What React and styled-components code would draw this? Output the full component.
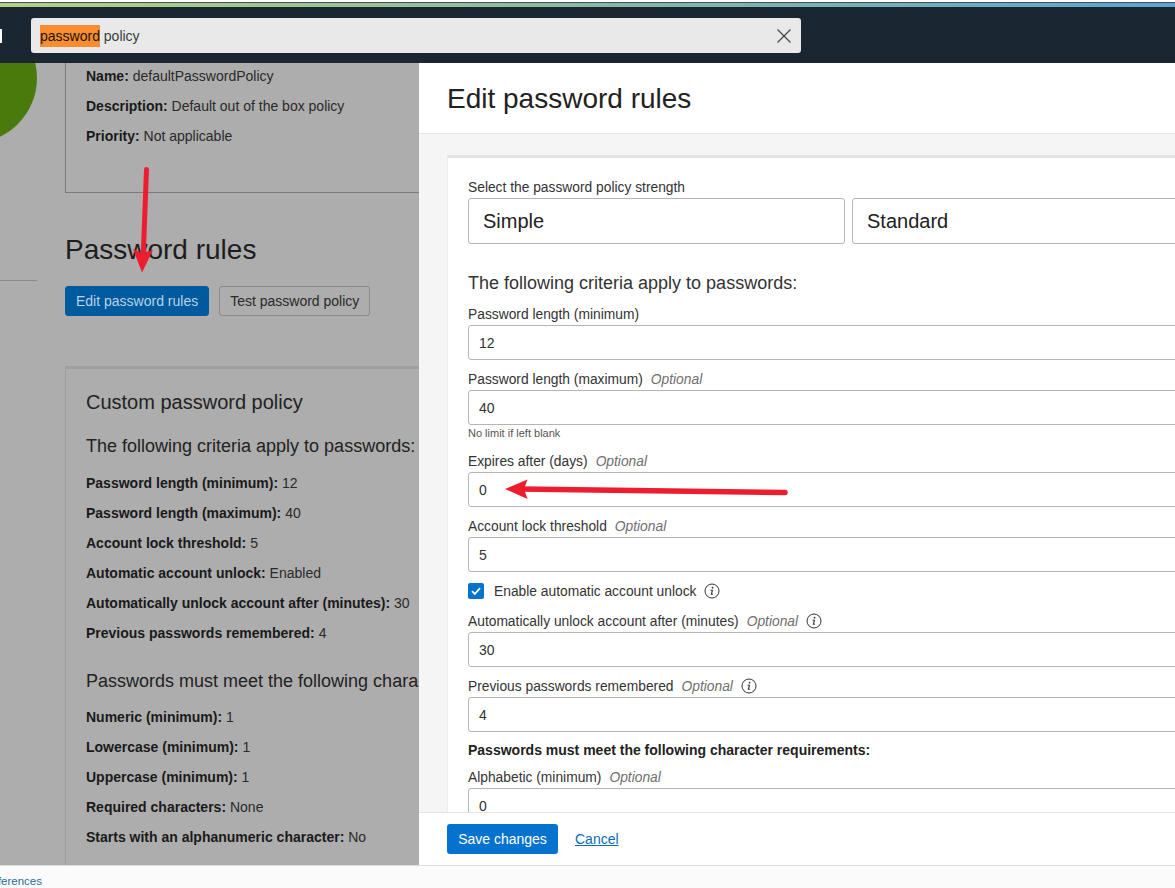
import React from 'react'
import styled, { createGlobalStyle } from 'styled-components'

const Global = createGlobalStyle`
  html, body {
    margin: 0;
    padding: 0;
    background: #fff;
  }
  * {
    box-sizing: border-box;
  }
`

const Page = styled.div`
  position: relative;
  width: 1175px;
  height: 888px;
  overflow: hidden;
  display: flex;
  flex-direction: column;
  font-family: "Liberation Sans", Arial, sans-serif;
  font-size: 14px;
  color: #161513;
`

const Stripe = styled.div`
  height: 7px;
  flex: none;
  border-top: 2px solid #fff;
  background: linear-gradient(90deg, #b3d27f 0%, #87bba0 50%, #5aa5d0 100%);
  box-shadow: inset 0 1px 0 #4a4a66;
`

const TopBar = styled.div`
  height: 56px;
  flex: none;
  background: #1b2633;
  display: flex;
  align-items: center;
  padding: 0 374px 0 0;
  gap: 29px;
`

const Notch = styled.div`
  width: 2px;
  height: 14px;
  margin-top: 1px;
  background: #fff;
  flex: none;
`

const Search = styled.div`
  flex: 1;
  height: 35px;
  margin-top: 1px;
  background: #e9e9e9;
  border-radius: 3px;
  display: flex;
  align-items: center;
  justify-content: space-between;
  padding: 0 9px;
  color: #3c3c3c;
  font-size: 14px;
`

const Hit = styled.mark`
  background: #fb8d2f;
  color: #161513;
  padding: 3px 0;
`

const Main = styled.div`
  flex: 1;
  min-height: 0;
  display: flex;
`

const Backdrop = styled.div`
  position: relative;
  width: 419px;
  flex: none;
  overflow: hidden;
  background: #adadad;
  padding-left: 65px;
`

const Blob = styled.div`
  position: absolute;
  left: -93px;
  top: -50px;
  width: 130px;
  height: 130px;
  border-radius: 50%;
  background: #4a7a0c;
`

const Rule = styled.div`
  position: absolute;
  left: 0;
  top: 217px;
  width: 37px;
  height: 1px;
  background: #8a8a8a;
`

const InfoBox = styled.div`
  width: 500px;
  height: 130px;
  border-left: 1px solid #7a7a7a;
  border-bottom: 1px solid #7a7a7a;
  padding: 0 0 0 20px;
`

const Line = styled.div`
  height: 30px;
  line-height: 26px;
  white-space: nowrap;
  color: #2a2a2a;
  b {
    color: #1a1a1a;
  }
`

const RulesTitle = styled.h2`
  margin: 39px 0 0;
  font-size: 28px;
  line-height: 36px;
  font-weight: 400;
  color: #1d1d1d;
`

const Actions = styled.div`
  display: flex;
  gap: 10px;
  margin-top: 18px;
`

const Btn = styled.button`
  height: 30px;
  padding: 0 10px;
  border-radius: 3px;
  font: 14px "Liberation Sans", Arial, sans-serif;
  border: 1px solid ${p => (p.$primary ? '#005a9e' : '#8a8a8a')};
  background: ${p => (p.$primary ? '#005a9e' : 'transparent')};
  color: ${p => (p.$primary ? '#b9d3e8' : '#2a2a2a')};
`

const PolicyCard = styled.div`
  width: 500px;
  margin-top: 50px;
  height: 600px;
  border-top: 3px solid #9f9f9f;
  border-left: 1px solid #9f9f9f;
  padding: 21px 0 0 20px;
  white-space: nowrap;
`

const CardTitle = styled.h3`
  margin: 0 0 21px;
  font-size: 20px;
  line-height: 24px;
  font-weight: 400;
  color: #222;
`

const CardSub = styled.h4`
  margin: ${p => p.$top || 0}px 0 ${p => p.$bottom || 12}px;
  font-size: 18px;
  line-height: 22px;
  font-weight: 400;
  color: #222;
`

const Drawer = styled.div`
  flex: 1;
  min-width: 0;
  display: flex;
  flex-direction: column;
  background: #fff;
`

const DrawerHead = styled.div`
  height: 71px;
  flex: none;
  padding: 2px 28px 0;
  display: flex;
  align-items: center;
  border-bottom: 1px solid #e4e4e4;
`

const DrawerTitle = styled.h1`
  margin: 0;
  font-size: 28px;
  font-weight: 400;
  color: #222;
`

const DrawerBody = styled.div`
  flex: 1;
  min-height: 0;
  overflow: hidden;
  background: #f5f5f5;
  padding: 21px 0 0 28px;
`

const Panel = styled.div`
  width: 800px;
  min-height: 700px;
  background: #fff;
  border-top: 3px solid #e4e4e4;
  border-left: 1px solid #eee;
  padding: 21px 0 0 20px;
`

const Label = styled.div`
  display: flex;
  align-items: center;
  height: 16px;
  font-size: 13.8px;
  color: #333;
  white-space: nowrap;
`

const Optional = styled.em`
  margin-left: 8px;
  color: #6f6f6f;
`

const Info = styled.svg`
  margin-left: 8px;
  flex: none;
`

const Field = styled.div`
  height: 35px;
  margin: 3px 0 ${p => p.$after ?? 11}px;
  border: 1px solid #b5b5b5;
  border-radius: 3px;
  display: flex;
  align-items: center;
  padding: 0 10px;
  font-size: 14px;
  color: #333;
`

const Tiles = styled.div`
  display: flex;
  gap: 7px;
  margin: 3px 0 0;
`

const Tile = styled.div`
  width: ${p => p.$w}px;
  flex: none;
  height: 46px;
  border: 1px solid #b5b5b5;
  border-radius: 3px;
  display: flex;
  align-items: center;
  padding: 0 14px;
  font-size: 20px;
  color: #222;
`

const CriteriaTitle = styled.h4`
  margin: 28px 0 12px;
  height: 22px;
  line-height: 22px;
  font-size: 18px;
  font-weight: 400;
  color: #333;
`

const Hint = styled.div`
  font-size: 11px;
  line-height: 14px;
  height: 14px;
  margin: 1px 0 13px;
  color: #555;
`

const CheckRow = styled.div`
  display: flex;
  align-items: center;
  height: 18px;
  margin: 10px 0 13px;
  font-size: 13.8px;
  color: #333;
`

const Box = styled.span`
  width: 16px;
  height: 16px;
  flex: none;
  border-radius: 2px;
  background: #0572ce;
  display: flex;
  align-items: center;
  justify-content: center;
  margin-right: 10px;
`

const ReqTitle = styled.div`
  font-weight: 700;
  font-size: 14px;
  line-height: 16px;
  margin: -1px 0 11px;
  color: #222;
`

const DrawerFoot = styled.div`
  height: 53px;
  flex: none;
  background: #fff;
  border-top: 1px solid #e4e4e4;
  display: flex;
  align-items: center;
  padding: 0 28px;
  gap: 17px;
`

const Save = styled.button`
  width: 111px;
  height: 30px;
  border: 0;
  border-radius: 3px;
  background: #0572ce;
  color: #fff;
  font: 14px "Liberation Sans", Arial, sans-serif;
`

const Cancel = styled.a`
  color: #0a6bb8;
  text-decoration: underline;
  font-size: 14px;
`

const BottomBar = styled.div`
  height: 23px;
  flex: none;
  padding-top: 8px;
  background: #fbfbfb;
  border-top: 1px solid #dcdcdc;
  display: flex;
  align-items: center;
  font-size: 11.5px;
  color: #2a6d9e;
  overflow: hidden;
`

const Crop = styled.span`
  margin-left: -20px;
`

const Overlay = styled.svg`
  position: absolute;
  left: 0;
  top: 0;
  pointer-events: none;
`

const InfoIcon = () => (
  <Info width='16' height='16' viewBox='0 0 16 16'>
    <circle cx='8' cy='8' r='7' fill='none' stroke='#333' strokeWidth='1' />
    <circle cx='8.6' cy='4.7' r='0.9' fill='#333' />
    <path d='M6.6 7.2h1.8L7.4 11.3h1.5' fill='none' stroke='#333' strokeWidth='1.1' />
  </Info>
)

const summaryTop = [
  ['Password length (minimum):', '12'],
  ['Password length (maximum):', '40'],
  ['Account lock threshold:', '5'],
  ['Automatic account unlock:', 'Enabled'],
  ['Automatically unlock account after (minutes):', '30'],
  ['Previous passwords remembered:', '4']
]

const summaryChars = [
  ['Numeric (minimum):', '1'],
  ['Lowercase (minimum):', '1'],
  ['Uppercase (minimum):', '1'],
  ['Required characters:', 'None'],
  ['Starts with an alphanumeric character:', 'No']
]

const Summary = ({ rows }) => rows.map(([k, v]) => (
  <Line key={k}><b>{k}</b> {v}</Line>
))

export default function App () {
  return <Page>
    <Global />
    <Stripe />
    <TopBar>
      <Notch />
      <Search>
        <span><Hit>password</Hit> policy</span>
        <svg width='16' height='16' viewBox='0 0 16 16'>
          <path d='M1.5 1.5l13 13M14.5 1.5l-13 13' stroke='#444' strokeWidth='1.2' fill='none' />
        </svg>
      </Search>
    </TopBar>
    <Main>
      <Backdrop>
        <Blob />
        <Rule />
        <InfoBox>
          <Line><b>Name:</b> defaultPasswordPolicy</Line>
          <Line><b>Description:</b> Default out of the box policy</Line>
          <Line><b>Priority:</b> Not applicable</Line>
        </InfoBox>
        <RulesTitle>Password rules</RulesTitle>
        <Actions>
          <Btn $primary>Edit password rules</Btn>
          <Btn>Test password policy</Btn>
        </Actions>
        <PolicyCard>
          <CardTitle>Custom password policy</CardTitle>
          <CardSub $bottom={13}>The following criteria apply to passwords:</CardSub>
          <Summary rows={summaryTop} />
          <CardSub $top={20}>Passwords must meet the following character requirements:</CardSub>
          <Summary rows={summaryChars} />
        </PolicyCard>
      </Backdrop>
      <Drawer>
        <DrawerHead>
          <DrawerTitle>Edit password rules</DrawerTitle>
        </DrawerHead>
        <DrawerBody>
          <Panel>
            <Label>Select the password policy strength</Label>
            <Tiles>
              <Tile $w={377}>Simple</Tile>
              <Tile $w={377}>Standard</Tile>
            </Tiles>
            <CriteriaTitle>The following criteria apply to passwords:</CriteriaTitle>
            <Label>Password length (minimum)</Label>
            <Field>12</Field>
            <Label>Password length (maximum) <Optional>Optional</Optional></Label>
            <Field $after={0}>40</Field>
            <Hint>No limit if left blank</Hint>
            <Label>Expires after (days) <Optional>Optional</Optional></Label>
            <Field>0</Field>
            <Label>Account lock threshold <Optional>Optional</Optional></Label>
            <Field $after={0}>5</Field>
            <CheckRow>
              <Box>
                <svg width='12' height='12' viewBox='0 0 12 12'>
                  <path d='M2 6.2l2.8 2.8L10 3.2' stroke='#fff' strokeWidth='1.8' fill='none' />
                </svg>
              </Box>
              Enable automatic account unlock
              <InfoIcon />
            </CheckRow>
            <Label>Automatically unlock account after (minutes) <Optional>Optional</Optional><InfoIcon /></Label>
            <Field>30</Field>
            <Label>Previous passwords remembered <Optional>Optional</Optional><InfoIcon /></Label>
            <Field>4</Field>
            <ReqTitle>Passwords must meet the following character requirements:</ReqTitle>
            <Label>Alphabetic (minimum) <Optional>Optional</Optional></Label>
            <Field>0</Field>
          </Panel>
        </DrawerBody>
        <DrawerFoot>
          <Save>Save changes</Save>
          <Cancel href='#cancel'>Cancel</Cancel>
        </DrawerFoot>
      </Drawer>
    </Main>
    <BottomBar><Crop>Preferences</Crop></BottomBar>
    <Overlay width='1175' height='888' viewBox='0 0 1175 888'>
      <path d='M146.5 169.5L143 262' stroke='#ed1c2e' strokeWidth='5' strokeLinecap='round' fill='none' />
      <path d='M142 272.5L133 249L142 253L153 250Z' fill='#ed1c2e' />
      <path d='M785 492.5L520 489' stroke='#ed1c2e' strokeWidth='5.5' strokeLinecap='round' fill='none' />
      <path d='M505 489L527.5 479.5L524 489L527.5 499Z' fill='#ed1c2e' />
    </Overlay>
  </Page>
}
